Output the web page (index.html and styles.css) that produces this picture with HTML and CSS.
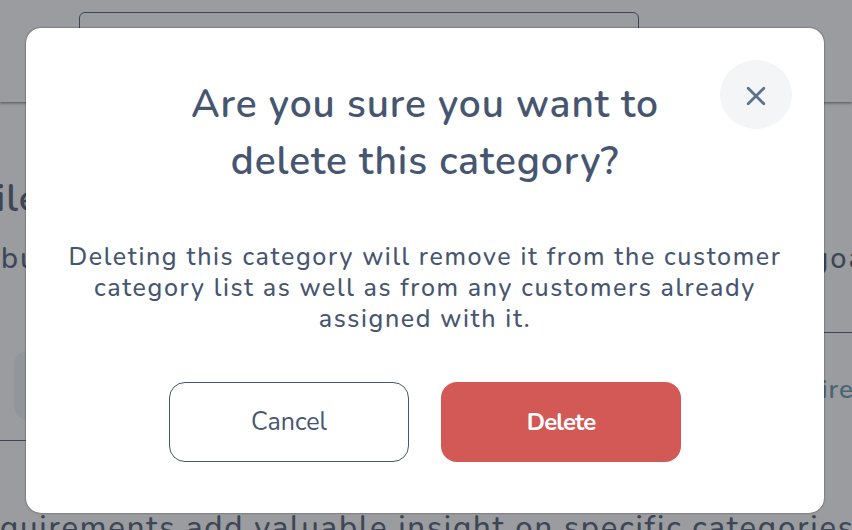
FILE: index.html
```html
<!DOCTYPE html>
<html lang="en">
<head>
    <meta charset="UTF-8">
    <meta name="viewport" content="width=device-width, initial-scale=1.0">
    <title>Delete category</title>
    <link rel="stylesheet" href="styles.css">
</head>
<body>

    <!-- Page behind the modal -->
    <div class="page">
        <header class="header">
            <div class="search"></div>
        </header>
        <main class="content">
            <h1 class="heading">ile</h1>
            <div class="intro"><span>bu</span><span>goa</span></div>
            <div class="panels">
                <div class="panel-left"><div class="chip"></div></div>
                <div class="panel-right">ire</div>
            </div>
            <p class="note">quirements add valuable insight on specific categories</p>
        </main>
    </div>

    <!-- Confirm modal -->
    <div class="overlay">
        <div class="modal">
            <button class="close" aria-label="Close">
                <svg width="20" height="20" viewBox="0 0 20 20">
                    <path d="M2.2 2.2L17.8 17.8M17.8 2.2L2.2 17.8" />
                </svg>
            </button>
            <h2 class="title">Are you sure you want to<br>delete this category?</h2>
            <p class="message">Deleting this category will remove it from the customer<br>category list as well as from any customers already<br>assigned with it.</p>
            <div class="actions">
                <button class="btn cancel">Cancel</button>
                <button class="btn delete">Delete</button>
            </div>
        </div>
    </div>

</body>
</html>
```
FILE: styles.css
```css
* {
    box-sizing: border-box;
}

body {
    margin: 0;
    height: 530px;
    overflow: hidden;
    position: relative;
    font-family: Nunito, Lato, sans-serif;
    color: #475670;
    background: white;
}

h1, h2, p {
    margin: 0;
}

.page {
    height: 530px;
    overflow: hidden;
}

.header {
    height: 102px;
    padding: 12px 0 0 79px;
    box-shadow: 0 1px 3px rgba(0, 0, 0, 0.6);
}

.search {
    width: 560px;
    height: 76px;
    border: 1px solid #475670;
    border-radius: 6px;
}

.content {
    white-space: nowrap;
}

.heading {
    height: 138px;
    padding-top: 74px;
    font-size: 38px;
    line-height: 46px;
    font-weight: 600;
    letter-spacing: 1px;
    margin-left: -4px;
}

.intro {
    display: flex;
    justify-content: space-between;
    height: 92px;
    padding: 1px 0 0 1px;
    font-size: 29px;
    line-height: 36px;
    letter-spacing: 2px;
    font-weight: 500;
    margin-right: -14px;
}

.panels {
    display: flex;
    justify-content: space-between;
    height: 109px;
}

.panel-left {
    width: 400px;
    padding: 19px 14px;
    border-bottom: 1px solid #475670;
}

.chip {
    width: 200px;
    height: 69px;
    border-radius: 14px;
    background: #eef4f6;
}

.panel-right {
    width: 400px;
    padding-top: 41px;
    border-top: 1px solid #475670;
    margin-right: -2px;
    color: #6195a6;
    font-size: 26px;
    line-height: 32px;
    letter-spacing: 1px;
    font-weight: 600;
    text-align: right;
}

.note {
    padding-top: 68px;
    font-size: 31px;
    line-height: 38px;
    font-weight: 500;
    letter-spacing: 1.82px;
}

.overlay {
    position: absolute;
    inset: 0;
    padding: 28px 28px 0 26px;
    background: rgba(52, 54, 60, 0.495);
}

.modal {
    position: relative;
    height: 485px;
    padding-top: 48px;
    border-radius: 15px;
    background: white;
    text-align: center;
    box-shadow: 0 0 2px rgba(0, 0, 0, 0.6);
}

.close {
    position: absolute;
    top: 32px;
    right: 32px;
    width: 72px;
    height: 69px;
    padding: 3px 0 0;
    border: none;
    border-radius: 50%;
    background: #f3f5f7;
    cursor: pointer;
}

.close svg {
    display: block;
    margin: 0 auto;
    fill: none;
    stroke: #5b7288;
    stroke-width: 2.8;
    stroke-linecap: round;
}

.title {
    font-size: 39px;
    line-height: 57px;
    font-weight: 600;
    letter-spacing: 0.9px;
}

.message {
    margin-top: 52px;
    font-size: 25px;
    line-height: 31px;
    letter-spacing: 1.62px;
    font-weight: 500;
}

.actions {
    display: flex;
    justify-content: center;
    gap: 32px;
    margin-top: 47px;
}

.btn {
    width: 240px;
    height: 80px;
    border-radius: 16px;
    font-family: inherit;
    font-size: 25px;
    cursor: pointer;
}

.cancel {
    border: 1px solid #475670;
    background: white;
    color: #475670;
}

.delete {
    padding: 0 0 0;
    border: none;
    background: #d35956;
    color: white;
    font-size: 24px;
    font-weight: 700;
    letter-spacing: -0.9px;
}
```
